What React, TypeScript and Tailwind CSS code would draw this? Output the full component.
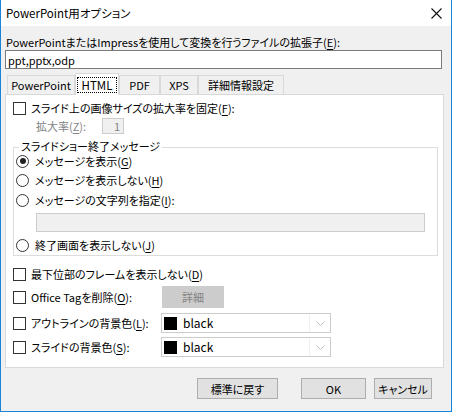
import React from 'react';

// Windows-style options dialog (PowerPoint用オプション)

const U = ({ c }: { c: string }) => (
  <span className="underline underline-offset-[2px] decoration-1">{c}</span>
);

function CheckBox() {
  return <span className="w-[13px] h-[13px] shrink-0 border border-[#333333] bg-white" />;
}

function Radio({ checked = false }: { checked?: boolean }) {
  return (
    <span className="w-[13px] h-[13px] shrink-0 rounded-full border border-[#333333] bg-white flex items-center justify-center">
      {checked && <span className="w-[6px] h-[6px] rounded-full bg-[#222222]" />}
    </span>
  );
}

function ColorCombo() {
  return (
    <div className="w-[170px] h-[20px] shrink-0 flex border border-[#cccccc] bg-white">
      <div className="flex-1 flex items-center gap-[6px] pl-[2px] border-r border-[#f0f0f0]">
        <span className="w-[13px] h-[13px] bg-black" />
        <span className="text-[12px]">black</span>
      </div>
      <div className="w-[20px] flex items-center justify-center">
        <svg width="9" height="5" viewBox="0 0 9 5" fill="none" stroke="#c0c0c0" strokeWidth="1">
          <path d="M0.5 0.5 L4.5 4.5 L8.5 0.5" />
        </svg>
      </div>
    </div>
  );
}

export default function App() {
  const tabs = [
    { label: 'PowerPoint', w: 'w-[68px]' },
    { label: 'HTML', w: 'w-[44px]', active: true },
    { label: 'PDF', w: 'w-[41px]' },
    { label: 'XPS', w: 'w-[38px]' },
    { label: '詳細情報設定', w: 'w-[86px]' },
  ];

  return (
    <div className="w-[452px] h-[414px] bg-white text-[11px] leading-[16px] text-black font-['Noto_Sans_CJK_JP',sans-serif] [font-feature-settings:'palt'] whitespace-nowrap">
      <div className="h-[412px] flex flex-col border-x border-b border-[#1883d7]">
        {/* Title bar */}
        <div className="h-[26px] shrink-0 flex items-center justify-between pl-[5px] pr-[9px] bg-white">
          <span className="text-[11.5px]">PowerPoint用オプション</span>
          <svg width="11" height="11" viewBox="0 0 11 11" stroke="#111111" strokeWidth="1.1">
            <path d="M0.5 0.5 L10.5 10.5 M10.5 0.5 L0.5 10.5" />
          </svg>
        </div>

        {/* Client area */}
        <div className="flex-1 bg-[#f0f0f0] pl-[4px] flex flex-col">
          <div className="mt-[8px] pl-[1px]">
            PowerPointまたはImpressを使用して変換を行うファイルの拡張子(<U c="E" />):
          </div>
          <div className="w-[437px] h-[19px] flex items-center pl-[2px] bg-white border border-[#7a7a7a]">
            ppt,pptx,odp
          </div>

          {/* Tabs */}
          <div className="mt-[4px] h-[21px] flex items-end pl-[2px]">
            {tabs.map((t) =>
              t.active ? (
                <div
                  key={t.label}
                  className={`${t.w} h-[22px] -mb-px relative z-10 flex items-center justify-center bg-white border-x border-t border-[#d9d9d9]`}
                >
                  <span className="border border-dotted border-black px-[4px] leading-[14px] text-[11.5px]">{t.label}</span>
                </div>
              ) : (
                <div
                  key={t.label}
                  className={`${t.w} h-[19px] flex items-center justify-center bg-[#f0f0f0] border-x border-t border-[#d9d9d9]`}
                >
                  {t.label}
                </div>
              )
            )}
          </div>

          {/* Tab panel */}
          <div className="w-[439px] h-[274px] bg-white border border-[#d9d9d9] pl-[7px] pt-[5px] flex flex-col">
            <div className="h-[16px] flex items-center gap-[5px]">
              <CheckBox />
              <span>スライド上の画像サイズの拡大率を固定(<U c="F" />):</span>
            </div>
            <div className="mt-px h-[17px] flex items-center pl-[23px] text-[#838383]">
              <span className="w-[66px]">拡大率(<U c="Z" />):</span>
              <span className="w-[22px] h-[16px] flex items-center justify-end pr-[3px] bg-[#f0f0f0] border border-[#cccccc]">1</span>
            </div>

            {/* Group box */}
            <div className="relative mt-[13px] w-[425px] h-[109px] border border-[#dcdcdc] pl-[2px] pt-[5px] flex flex-col">
              <span className="absolute -top-[10px] left-[5px] bg-white px-[2px]">スライドショー終了メッセージ</span>
              <div className="h-[16px] flex items-center gap-[6px]">
                <Radio checked />
                <span>メッセージを表示(<U c="G" />)</span>
              </div>
              <div className="mt-[3px] h-[16px] flex items-center gap-[6px]">
                <Radio />
                <span>メッセージを表示しない(<U c="H" />)</span>
              </div>
              <div className="mt-[4px] h-[16px] flex items-center gap-[6px]">
                <Radio />
                <span>メッセージの文字列を指定(<U c="I" />):</span>
              </div>
              <div className="mt-[5px] ml-[20px] w-[389px] h-[19px] bg-[#f0f0f0] border border-[#cccccc]" />
              <div className="mt-[5px] h-[16px] flex items-center gap-[6px]">
                <Radio />
                <span>終了画面を表示しない(<U c="J" />)</span>
              </div>
            </div>

            <div className="mt-[10px] h-[16px] flex items-center gap-[5px]">
              <CheckBox />
              <span>最下位部のフレームを表示しない(<U c="D" />)</span>
            </div>
            <div className="mt-[4px] h-[22px] flex items-center gap-[5px]">
              <CheckBox />
              <span className="w-[126px]">Office Tagを削除(<U c="O" />):</span>
              <span className="w-[62px] h-[22px] flex items-center justify-center bg-[#cccccc] text-[#838383]">詳細</span>
            </div>
            <div className="mt-[5px] h-[20px] flex items-center gap-[5px]">
              <CheckBox />
              <span className="w-[125px]">アウトラインの背景色(<U c="L" />):</span>
              <ColorCombo />
            </div>
            <div className="mt-[4px] h-[20px] flex items-center gap-[5px]">
              <CheckBox />
              <span className="w-[125px]">スライドの背景色(<U c="S" />):</span>
              <ColorCombo />
            </div>
          </div>

          {/* Buttons */}
          <div className="mt-[10px] flex pl-[192px]">
            <button className="w-[81px] h-[21px] flex items-center justify-center bg-[#e1e1e1] border border-[#adadad]">標準に戻す</button>
            <button className="ml-[23px] w-[65px] h-[21px] flex items-center justify-center bg-[#e1e1e1] border border-[#adadad]">OK</button>
            <button className="ml-[8px] w-[58px] h-[21px] flex items-center justify-center bg-[#e1e1e1] border border-[#adadad]">キャンセル</button>
          </div>
        </div>
      </div>
    </div>
  );
}
